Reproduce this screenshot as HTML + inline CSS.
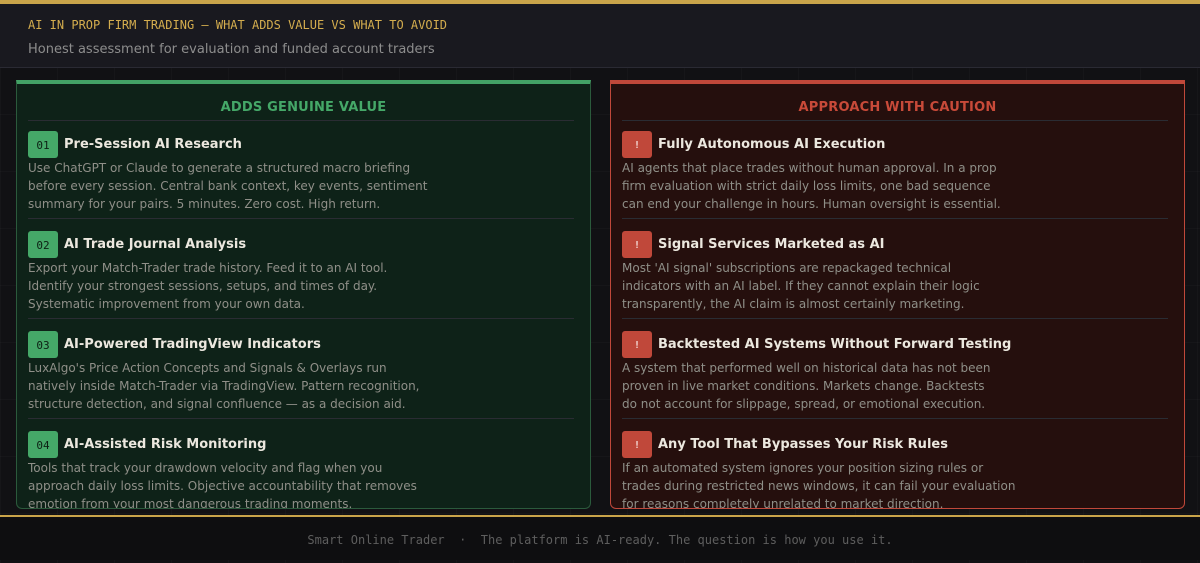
<!DOCTYPE html>
<html><head><meta charset="utf-8"><style>
*{margin:0;padding:0;box-sizing:border-box}
body{width:1200px;height:560px;overflow:hidden;background:#111114;font-family:"DejaVu Sans","Liberation Sans",sans-serif;position:relative;
background-image:linear-gradient(rgba(255,255,255,0.02) 1px,transparent 1px),linear-gradient(90deg,rgba(255,255,255,0.02) 1px,transparent 1px);background-size:57px 57px}
.top{position:absolute;left:0;top:0;width:1200px;height:4px;background:#c9a44a}
.hdr{position:absolute;left:0;top:4px;width:1200px;height:64px;background:#19191f;border-bottom:1px solid #2a2a33}
.h1{position:absolute;left:28px;top:14px;font-family:"DejaVu Sans Mono","Liberation Mono",monospace;font-size:12px;color:#d4ad4e;letter-spacing:0}
.h2{position:absolute;left:28px;top:38px;font-size:13px;color:#8d8d8d}
.card{position:absolute;top:80px;width:575px;height:429px;border-radius:0 0 6px 6px;overflow:hidden}
.g{left:16px;background:#0e2218;border:1px solid #2b5a3c;border-top:4px solid #43a266}
.r{left:610px;background:#250f0d;border:1px solid #c0483a;border-top:4px solid #c0483a}
.ct{position:absolute;left:0;width:100%;top:16px;text-align:center;font-size:13px;font-weight:bold;letter-spacing:0.2px}
.g .ct{color:#45a868}.r .ct{color:#c84a39}
.dv{position:absolute;left:11px;right:16px;height:1px;background:#2a2c33}
.it{position:absolute;left:11px;width:550px}
.bd{position:absolute;left:0;top:0;width:30px;height:27px;border-radius:3px;font-family:"DejaVu Sans Mono",monospace;font-size:11px;color:#0d2014;text-align:center;line-height:30px}
.g .bd{background:#45a868}.r .bd{background:#c0483a;color:#f3d9d5;font-weight:bold;font-size:10px}
.t{position:absolute;left:36px;top:6px;font-size:13px;font-weight:bold;color:#ece8df;white-space:nowrap}
.d{position:absolute;left:0;top:28px;font-size:12px;line-height:18px;color:#8f8f88;white-space:nowrap}
.fl{position:absolute;left:0;top:515px;width:1200px;height:2px;background:#c9a44a}
.ft{position:absolute;left:0;top:517px;width:1200px;height:43px;background:#0e0e10;text-align:center;font-family:"DejaVu Sans Mono",monospace;font-size:12px;color:#5e5e5e;line-height:46px}
</style></head><body>
<div class="top"></div>
<div class="hdr"><div class="h1">AI IN PROP FIRM TRADING — WHAT ADDS VALUE VS WHAT TO AVOID</div><div class="h2">Honest assessment for evaluation and funded account traders</div></div>

<div class="card g">
<div class="ct">ADDS GENUINE VALUE</div>
<div class="dv" style="top:36px"></div>
<div class="it" style="top:47px"><div class="bd">01</div><div class="t">Pre-Session AI Research</div><div class="d">Use ChatGPT or Claude to generate a structured macro briefing<br>before every session. Central bank context, key events, sentiment<br>summary for your pairs. 5 minutes. Zero cost. High return.</div></div>
<div class="dv" style="top:134px"></div>
<div class="it" style="top:147px"><div class="bd">02</div><div class="t">AI Trade Journal Analysis</div><div class="d">Export your Match-Trader trade history. Feed it to an AI tool.<br>Identify your strongest sessions, setups, and times of day.<br>Systematic improvement from your own data.</div></div>
<div class="dv" style="top:234px"></div>
<div class="it" style="top:247px"><div class="bd">03</div><div class="t">AI-Powered TradingView Indicators</div><div class="d">LuxAlgo's Price Action Concepts and Signals &amp; Overlays run<br>natively inside Match-Trader via TradingView. Pattern recognition,<br>structure detection, and signal confluence — as a decision aid.</div></div>
<div class="dv" style="top:334px"></div>
<div class="it" style="top:347px"><div class="bd">04</div><div class="t">AI-Assisted Risk Monitoring</div><div class="d">Tools that track your drawdown velocity and flag when you<br>approach daily loss limits. Objective accountability that removes<br>emotion from your most dangerous trading moments.</div></div>
</div>

<div class="card r">
<div class="ct">APPROACH WITH CAUTION</div>
<div class="dv" style="top:36px"></div>
<div class="it" style="top:47px"><div class="bd">!</div><div class="t">Fully Autonomous AI Execution</div><div class="d">AI agents that place trades without human approval. In a prop<br>firm evaluation with strict daily loss limits, one bad sequence<br>can end your challenge in hours. Human oversight is essential.</div></div>
<div class="dv" style="top:134px"></div>
<div class="it" style="top:147px"><div class="bd">!</div><div class="t">Signal Services Marketed as AI</div><div class="d">Most 'AI signal' subscriptions are repackaged technical<br>indicators with an AI label. If they cannot explain their logic<br>transparently, the AI claim is almost certainly marketing.</div></div>
<div class="dv" style="top:234px"></div>
<div class="it" style="top:247px"><div class="bd">!</div><div class="t">Backtested AI Systems Without Forward Testing</div><div class="d">A system that performed well on historical data has not been<br>proven in live market conditions. Markets change. Backtests<br>do not account for slippage, spread, or emotional execution.</div></div>
<div class="dv" style="top:334px"></div>
<div class="it" style="top:347px"><div class="bd">!</div><div class="t">Any Tool That Bypasses Your Risk Rules</div><div class="d">If an automated system ignores your position sizing rules or<br>trades during restricted news windows, it can fail your evaluation<br>for reasons completely unrelated to market direction.</div></div>
</div>

<div class="fl"></div>
<div class="ft">Smart Online Trader &nbsp;·&nbsp; The platform is AI-ready. The question is how you use it.</div>
</body></html>
